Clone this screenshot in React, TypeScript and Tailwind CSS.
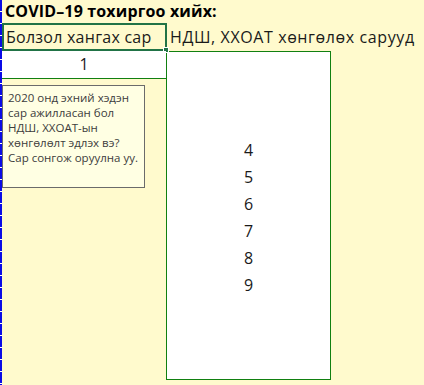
import React from 'react'

const font = { fontFamily: '"Open Sans", "Noto Sans", sans-serif' }

const months = [4, 5, 6, 7, 8, 9]

const note = ['2020 онд эхний хэдэн', 'сар ажилласан бол', 'НДШ, ХХОАТ-ын', 'хөнгөлөлт эдлэх вэ?', 'Сар сонгож оруулна уу.']

function Comment (): JSX.Element {
  return (
    <div className="absolute left-0 top-[34px] w-[143px] h-[103px] border border-[#6b6b6b] bg-[#ffffe3] pl-[5px] pt-[4px] text-[11.5px] leading-[15px] text-[#3c3c3c] whitespace-nowrap">
      {note.map(line => <div key={line}>{line}</div>)}
    </div>
  )
}

export default function App (): JSX.Element {
  return (
    <div className="w-[424px] h-[385px] overflow-hidden bg-[#fffacd] flex" style={font}>
      <div className="w-[2px] shrink-0 bg-[repeating-linear-gradient(to_bottom,#0a0ae6_0px,#0a0ae6_11px,#ffffff_11px,#ffffff_12px)]" />
      <div className="flex-1 flex flex-col text-[#1a1a1a]">
        <div className="h-[23px] pl-[3px] pt-[1px] text-[16px] leading-[21px] font-bold tracking-[0.15px] text-black">COVID–19 тохиргоо хийх:</div>
        <div className="flex h-[28px]">
          <div className="relative w-[165px] shrink-0 border-2 border-[#217346] pl-[2px] text-[16px] leading-[24px] tracking-[0.25px] whitespace-nowrap">
            Болзол хангах сар
            <div className="absolute right-[-4px] bottom-[-4px] w-[6px] h-[6px] bg-[#217346] border border-white" />
          </div>
          <div className="pl-[3px] text-[16px] leading-[29px] tracking-[0.6px] whitespace-nowrap">НДШ, ХХОАТ хөнгөлөх сарууд</div>
        </div>
        <div className="flex flex-1">
          <div className="relative w-[164px] shrink-0">
            <div className="h-[28px] bg-white border-b border-[#118011] text-center text-[16px] leading-[27px]">1</div>
            <Comment />
          </div>
          <div className="w-[165px] h-[329px] bg-white border border-[#118011] pt-[85px] flex flex-col items-center text-[16px]">
            {months.map(m => (
              <div key={m} className="h-[27px] leading-[27px]">{m}</div>
            ))}
          </div>
        </div>
      </div>
    </div>
  )
}
